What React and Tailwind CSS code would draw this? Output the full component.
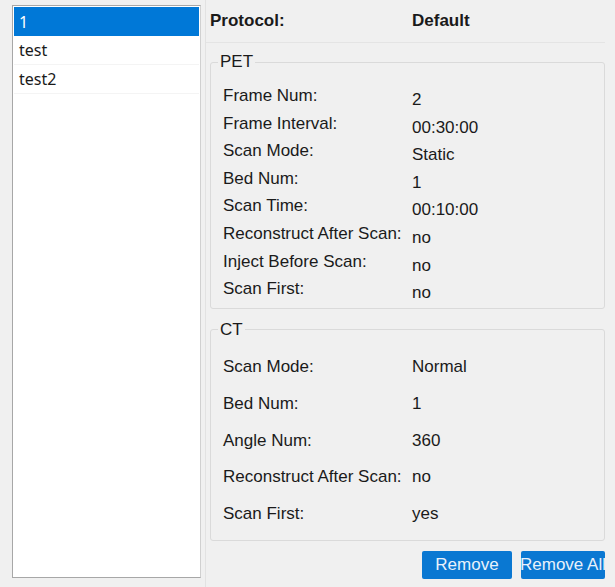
import React from 'react';

const petRows = [
  ['Frame Num:', '2'],
  ['Frame Interval:', '00:30:00'],
  ['Scan Mode:', 'Static'],
  ['Bed Num:', '1'],
  ['Scan Time:', '00:10:00'],
  ['Reconstruct After Scan:', 'no'],
  ['Inject Before Scan:', 'no'],
  ['Scan First:', 'no'],
];

const ctRows = [
  ['Scan Mode:', 'Normal'],
  ['Bed Num:', '1'],
  ['Angle Num:', '360'],
  ['Reconstruct After Scan:', 'no'],
  ['Scan First:', 'yes'],
];

const items = ['1', 'test', 'test2'];

export default function App() {
  return (
    <div className="w-[615px] h-[587px] bg-[#f0f0f0] flex overflow-hidden text-[#1a1a1a]">
      {/* protocol list */}
      <div className="ml-[12px] mt-[5px] w-[189px] h-[573px] bg-white border border-[#a7a7a7] border-r-[#d0d0d0] p-[1px] font-['Noto_Sans',sans-serif] text-[16px]">
        {items.map((name, i) => (
          <div
            key={name}
            className={
              i === 0
                ? 'h-[29px] flex items-center px-[5px] bg-[#0078d7] text-white'
                : 'h-[29px] flex items-center px-[5px] border-b border-[#f4f4f4]'
            }
          >
            {name}
          </div>
        ))}
      </div>

      {/* details */}
      <div className="ml-[4px] w-[402px] flex flex-col border-l border-[#e2e2e2] font-['Liberation_Sans',Arial,sans-serif] text-[17px]">
        <div className="h-[43px] flex items-center pl-[4px] mr-[2px] border-b border-[#e4e4e4] font-bold">
          <div className="w-[202px]">Protocol:</div>
          <div>Default</div>
        </div>

        <fieldset className="ml-[4px] mr-[2px] mt-[9px] border border-[#dadada] rounded-[3px] px-[12px] pt-[14px] pb-[1px]">
          <legend className="ml-[-5px] px-[2px] leading-[20px]">PET</legend>
          {petRows.map(([k, v]) => (
            <div key={k} className="h-[27.6px] flex items-start leading-[20px]">
              <div className="w-[189px] whitespace-nowrap">{k}</div>
              <div className="mt-[4px]">{v}</div>
            </div>
          ))}
        </fieldset>

        <fieldset className="ml-[4px] mr-[2px] mt-[11px] border border-[#dadada] rounded-[3px] px-[12px] pt-[9px] pb-[7px]">
          <legend className="ml-[-5px] px-[2px] leading-[20px]">CT</legend>
          {ctRows.map(([k, v]) => (
            <div key={k} className="h-[36.75px] flex items-center leading-[20px]">
              <div className="w-[189px] whitespace-nowrap">{k}</div>
              <div>{v}</div>
            </div>
          ))}
        </fieldset>

        <div className="mt-[10px] mr-[2px] flex justify-end gap-[9px]">
          <button className="w-[90px] h-[28px] bg-[#0a78d2] text-[#e8f1fb] rounded-[2px] flex items-center justify-center">
            Remove
          </button>
          <button className="w-[84px] h-[28px] bg-[#0a78d2] text-[#e8f1fb] rounded-[2px] flex items-center justify-center overflow-hidden whitespace-nowrap">
            Remove All
          </button>
        </div>
      </div>
    </div>
  );
}
